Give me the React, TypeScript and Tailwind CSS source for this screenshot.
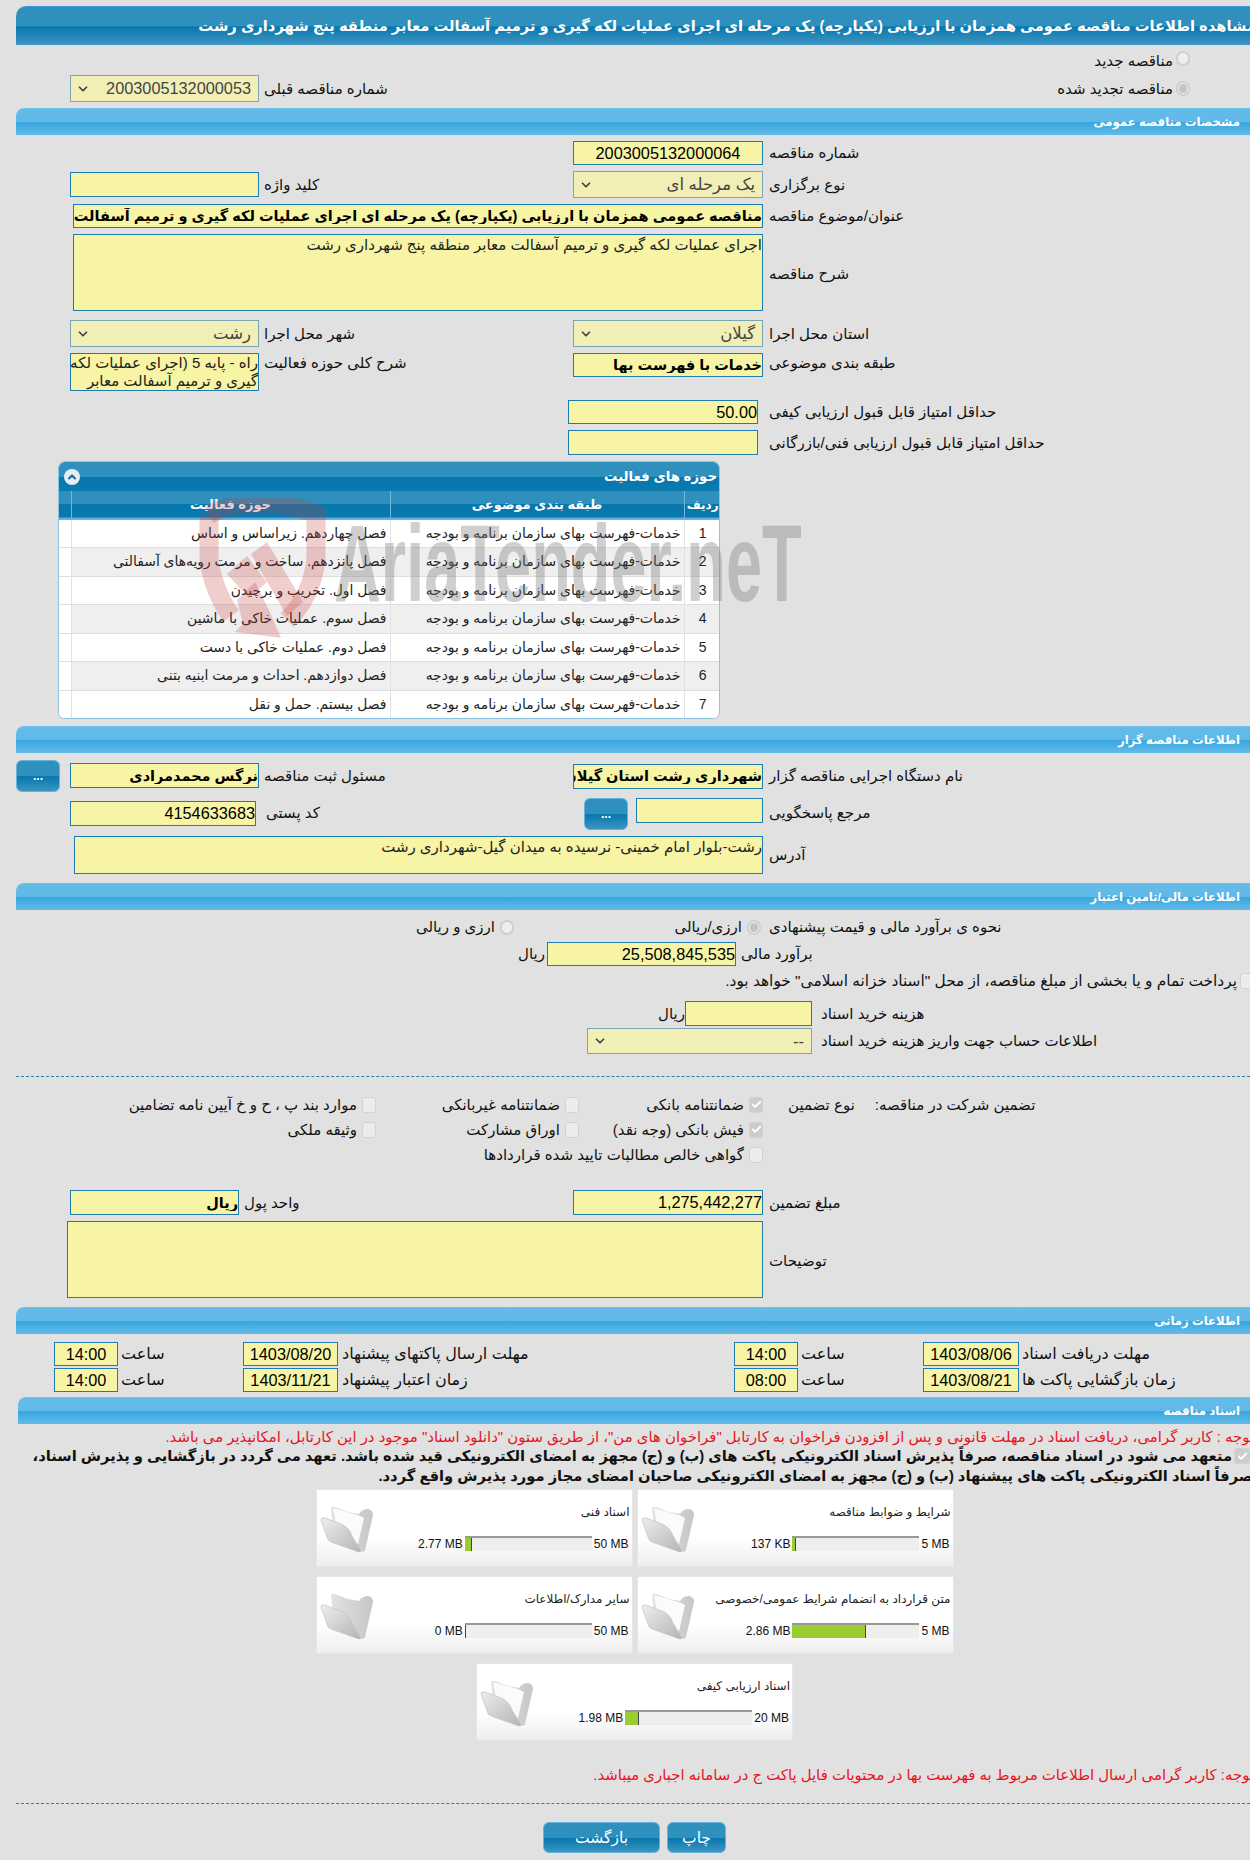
import { ChevronDown, Check, ChevronUp } from 'lucide-react'

const font = "font-['Liberation_Sans','DejaVu_Sans',sans-serif]"

function SectionBar({ title, className }: { title: string; className: string }) {
  return (
    <div className={`h-[27px] rounded-tl-[8px] bg-[linear-gradient(#64bbe9_0%,#60b9e8_50%,#38a7e0_52%,#62bbe9_100%)] border-t border-[#6cc3ef] flex items-center justify-end pr-[10px] text-white text-[11.7px] font-bold ${className}`}>
      <span dir="rtl">{title}</span>
    </div>
  )
}

function Label({ children, className = '' }: { children: React.ReactNode; className?: string }) {
  return <div dir="rtl" className={`text-left text-[15px] leading-[20px] text-[#111] whitespace-nowrap ${className}`}>{children}</div>
}

function Field({ value = '', className = '', bold = false }: { value?: string; className?: string; bold?: boolean }) {
  return (
    <input
      readOnly
      dir="rtl"
      value={value}
      className={`block h-[24px] bg-[#f7f5a5] border border-[#1f7cb0] outline-none text-black ${bold ? 'text-[14.5px] font-bold' : 'text-[16.3px]'} ${className}`}
    />
  )
}

function Area({ value = '', className = '' }: { value?: string; className?: string }) {
  return (
    <textarea
      readOnly
      dir="rtl"
      value={value}
      className={`block resize-none bg-[#f7f5a5] border border-[#1f7cb0] outline-none text-[15px] text-[#222] leading-[20px] overflow-hidden ${className}`}
    />
  )
}

function Select({ value, className = '', latin = false }: { value: string; className?: string; latin?: boolean }) {
  return (
    <div className={`h-[27px] bg-[#f1efb6] border border-[#7ba4b4] flex items-center justify-between pl-[5px] pr-[7px] text-[#444] ${latin ? 'text-[16.3px]' : 'text-[16.5px]'} ${className}`}>
      <ChevronDown size={14} strokeWidth={3} className="text-[#444]" />
      <span dir="rtl">{value}</span>
    </div>
  )
}

function Radio({ on = false }: { on?: boolean }) {
  return (
    <span className="shrink-0 w-[14px] h-[15px] rounded-full border-2 border-[#cfcfcf] bg-[#efefef] flex items-center justify-center">
      {on && <span className="w-[8px] h-[9px] rounded-full bg-[#c4c4c4]" />}
    </span>
  )
}

function Tick({ on = false, className = '' }: { on?: boolean; className?: string }) {
  return (
    <span className={`shrink-0 w-[14px] h-[16px] rounded-[3px] border border-[#d2d2d2] flex items-center justify-center ${on ? 'bg-[#cdcdcd]' : 'bg-[#ececec]'} ${className}`}>
      {on && <Check size={11} strokeWidth={4} className="text-white" />}
    </span>
  )
}

function DotsButton({ className = '' }: { className?: string }) {
  return (
    <div className={`w-[44px] h-[32px] rounded-[6px] border border-[#64b4dc] bg-[linear-gradient(#2f8fbd_0%,#2f8fbd_50%,#0677ae_52%,#3c95c0_100%)] text-white text-[12px] font-bold flex items-center justify-center ${className}`}>
      ...
    </div>
  )
}

function Folder({ open = true }: { open?: boolean }) {
  return (
    <svg viewBox="0 0 54 48" className="w-[54px] h-[48px] shrink-0 mt-[16px]">
      <defs>
        <linearGradient id="foldFront" x1="0" y1="0" x2="1" y2="1">
          <stop offset="0" stopColor="#eeeeee" />
          <stop offset="1" stopColor="#b4b4b4" />
        </linearGradient>
        <linearGradient id="foldBack" x1="0" y1="0" x2="1" y2="0">
          <stop offset="0" stopColor="#e2e2e2" />
          <stop offset="1" stopColor="#c6c6c6" />
        </linearGradient>
      </defs>
      <path d="M11 2 Q12 0 15 1 L28 6 L39 8 Q42 3 48 3 Q53 4 53 9 L45 44 Q44 47 40 45 L14 30 Z" fill="url(#foldBack)" />
      {open && <path d="M13 2 L38 9 L44 12 L38 38 L17 24 Z" fill="#fbfbfb" />}
      <path d="M1 14 Q1 11 5 12 L21 18 Q29 21 32 30 L41 45 Q40 47 36 45 L11 36 Q8 35 7 31 Z" fill="url(#foldFront)" stroke="#c2c2c2" strokeWidth="0.7" />
    </svg>
  )
}

function FileCard({ title, max, used, pct, open = true }: { title: string; max: string; used: string; pct: number; open?: boolean }) {
  return (
    <div className="w-[317px] h-[78px] bg-[linear-gradient(#ffffff_0%,#ffffff_62%,#eeeeee_100%)] border border-[#e6e6e6] flex items-start pl-[3px]">
      <Folder open={open} />
      <div className="flex-1 pt-[14px]">
        <div dir="rtl" className="text-[12px] text-[#222] h-[32px] leading-[16px] pr-[2px] whitespace-nowrap">{title}</div>
        <div className="flex items-center justify-end text-[12px] text-[#111] h-[15px]">
          <span className="pr-[2px]">{used}</span>
          <div className="w-[127px] h-[15px] bg-[#eeeeee] border-t-2 border-[#999]">
            <div className="h-full bg-[#9acd32] border-r border-[#444]" style={{ width: `${pct}%` }} />
          </div>
          <span className="pl-[2px] pr-[3px]">{max}</span>
        </div>
      </div>
    </div>
  )
}

const rows = [
  'فصل چهاردهم. زیراساس و اساس',
  'فصل پانزدهم. ساخت و مرمت رویه‌های آسفالتی',
  'فصل اول. تخریب و برچیدن',
  'فصل سوم. عملیات خاکی با ماشین',
  'فصل دوم. عملیات خاکی با دست',
  'فصل دوازدهم. احداث و مرمت ابنیه بتنی',
  'فصل بیستم. حمل و نقل',
]

function ActivityTable() {
  return (
    <div className="w-[662px] ml-[58px] mt-[6px] h-[258px] rounded-[7px] border border-[#8cc4e4] overflow-hidden bg-white">
      <div className="h-[29px] bg-[linear-gradient(#2f8fbd_0%,#2f8fbd_50%,#0677ae_52%,#0a7ab0_100%)] flex items-center justify-between pl-[5px] pr-[2px] text-white font-bold text-[13.3px]">
        <span className="w-[16px] h-[16px] rounded-full bg-[#e4eef4] flex items-center justify-center">
          <ChevronUp size={12} strokeWidth={4} className="text-[#0a6a9c]" />
        </span>
        <span dir="rtl">حوزه های فعالیت</span>
      </div>
      <table dir="rtl" className="w-full table-fixed border-collapse">
        <colgroup>
          <col className="w-[37px]" />
          <col className="w-[294px]" />
          <col className="w-[319px]" />
          <col className="w-[12px]" />
        </colgroup>
        <thead>
          <tr className="h-[28px] bg-[linear-gradient(#2f8fbd_0%,#2f8fbd_50%,#0677ae_52%,#0a7ab0_100%)] text-white text-[13px] font-bold border-b-2 border-[#5fb6e4]">
            <th className="border-l border-[#6fb7dd] font-bold text-[12px] whitespace-nowrap">ردیف</th>
            <th className="border-l border-[#6fb7dd] font-bold">طبقه بندی موضوعی</th>
            <th className="border-l border-[#6fb7dd] font-bold">حوزه فعالیت</th>
            <th />
          </tr>
        </thead>
        <tbody className="text-[13.9px] text-[#222]">
          {rows.map((r, i) => (
            <tr key={i} className={`h-[28.5px] border-b border-[#dedede] ${i % 2 ? 'bg-[#efefef]' : 'bg-white'}`}>
              <td className="text-center border-l border-[#e2e2e2] text-[14px]">{i + 1}</td>
              <td className="pr-[3px] border-l border-[#e2e2e2] whitespace-nowrap">خدمات-فهرست بهای سازمان برنامه و بودجه</td>
              <td className="pr-[3px] border-l border-[#e2e2e2] whitespace-nowrap">{r}</td>
              <td className="bg-white" />
            </tr>
          ))}
        </tbody>
      </table>
    </div>
  )
}

function Watermark() {
  return (
    <div className="absolute left-[199px] top-[498px] w-[610px] h-[146px] pointer-events-none">
      <svg viewBox="0 0 127 146" className="absolute left-0 top-0 w-[127px] h-[146px]">
        <path d="M10 16 Q62 -6 117 16 L117 62 Q112 100 88 122" fill="none" stroke="#c83c3c" strokeOpacity="0.25" strokeWidth="19" />
        <path d="M10 16 L10 62 Q14 92 32 118" fill="none" stroke="#c83c3c" strokeOpacity="0.25" strokeWidth="19" />
        <path d="M28 76 L48 58 L68 84 L50 100 Z" fill="#c83c3c" fillOpacity="0.25" />
        <path d="M52 56 L68 44 L104 104 L88 118 Z" fill="#c83c3c" fillOpacity="0.25" />
        <path d="M38 102 L56 84 L70 112 L82 140 L36 134 L44 126 Z" fill="#c83c3c" fillOpacity="0.25" />
      </svg>
      <div className="absolute left-[135px] top-[15px] text-[110px] leading-[100px] font-bold text-[#777] opacity-35 whitespace-nowrap font-['Liberation_Sans',sans-serif] origin-left scale-x-[0.59]">
        AriaTender.neT
      </div>
    </div>
  )
}

function FormRow({ children, className = '' }: { children: React.ReactNode; className?: string }) {
  return <div className={`grid grid-cols-[259px_310px_194px_1fr] ${className}`}>{children}</div>
}

export default function App() {
  return (
    <div className={`relative w-[1250px] h-[1860px] overflow-hidden bg-[#e1e1e1] pt-[6px] ${font}`}>
      {/* top title */}
      <div className="ml-[16px] h-[39px] rounded-tl-[10px] overflow-hidden bg-[linear-gradient(#2f8fbd_0%,#2f8fbd_50%,#0677ae_52%,#4096c2_100%)] border-t border-[#3a9ad8] flex items-center justify-end text-white text-[14.7px] font-bold">
        <span dir="rtl" className="shrink-0 whitespace-nowrap -mr-[6px]">
          مشاهده اطلاعات مناقصه عمومی همزمان با ارزیابی (یکپارچه) یک مرحله ای اجرای عملیات لکه گیری و ترمیم آسفالت معابر منطقه پنج شهرداری رشت
        </span>
      </div>

      <div className="h-[30px] pt-[6px] flex justify-end items-start pr-[60px] gap-[3px]">
        <Label>مناقصه جدید</Label>
        <Radio />
      </div>

      <FormRow className="h-[27px] items-center">
        <div className="flex justify-end"><Select latin value="2003005132000053" className="w-[189px]" /></div>
        <Label className="pl-[5px]">شماره مناقصه قبلی</Label>
        <div />
        <div className="flex justify-end items-center pr-[60px] gap-[3px]">
          <Label>مناقصه تجدید شده</Label>
          <Radio on />
        </div>
      </FormRow>

      <SectionBar title="مشخصات مناقصه عمومی" className="ml-[16px] mt-[6px]" />

      <FormRow className="mt-[6px] items-center">
        <div />
        <div />
        <div className="flex justify-end"><Field value="2003005132000064" className="w-[190px] text-center" /></div>
        <Label className="pl-[6px]">شماره مناقصه</Label>
      </FormRow>

      <FormRow className="mt-[6px] items-center h-[27px]">
        <div className="flex justify-end"><Field className="w-[189px] !h-[25px]" /></div>
        <Label className="pl-[5px]">کلید واژه</Label>
        <div className="flex justify-end"><Select value="یک مرحله ای" className="w-[190px]" /></div>
        <Label className="pl-[6px]">نوع برگزاری</Label>
      </FormRow>

      <FormRow className="mt-[6px] items-center">
        <div className="col-span-3 flex justify-end">
          <Field bold value="مناقصه عمومی همزمان با ارزیابی (یکپارچه) یک مرحله ای اجرای عملیات لکه گیری و ترمیم آسفالت معابر منطقه پنج شهرداری رشت" className="w-[690px]" />
        </div>
        <Label className="pl-[6px]">عنوان/موضوع مناقصه</Label>
      </FormRow>

      <FormRow className="mt-[6px] items-center">
        <div className="col-span-3 flex justify-end">
          <Area value="اجرای عملیات لکه گیری و ترمیم آسفالت معابر منطقه پنج شهرداری رشت" className="w-[690px] h-[77px]" />
        </div>
        <Label className="pl-[6px] pt-[3px]">شرح مناقصه</Label>
      </FormRow>

      <FormRow className="mt-[9px] items-center">
        <div className="flex justify-end"><Select value="رشت" className="w-[189px]" /></div>
        <Label className="pl-[5px]">شهر محل اجرا</Label>
        <div className="flex justify-end"><Select value="گیلان" className="w-[190px]" /></div>
        <Label className="pl-[6px]">استان محل اجرا</Label>
      </FormRow>

      <FormRow className="mt-[6px] items-start h-[38px]">
        <div className="flex justify-end">
          <Area value={'راه - پایه 5 (اجرای عملیات لکه\nگیری و ترمیم آسفالت معابر'} className="w-[189px] h-[38px] !leading-[18px] whitespace-pre" />
        </div>
        <Label className="pl-[5px]">شرح کلی حوزه فعالیت</Label>
        <div className="flex justify-end"><Field bold value="خدمات با فهرست بها" className="w-[190px]" /></div>
        <Label className="pl-[6px]">طبقه بندی موضوعی</Label>
      </FormRow>

      <FormRow className="mt-[9px] items-center">
        <div />
        <div />
        <div className="flex justify-end pr-[5px]"><Field value="50.00" className="w-[190px]" /></div>
        <Label className="pl-[6px]">حداقل امتیاز قابل قبول ارزیابی کیفی</Label>
      </FormRow>

      <FormRow className="mt-[6px] items-center">
        <div />
        <div />
        <div className="flex justify-end pr-[5px]"><Field className="w-[190px] !h-[25px]" /></div>
        <Label className="pl-[6px]">حداقل امتیاز قابل قبول ارزیابی فنی/بازرگانی</Label>
      </FormRow>

      <ActivityTable />
      <Watermark />

      <SectionBar title="اطلاعات مناقصه گزار" className="ml-[16px] mt-[7px]" />

      <FormRow className="mt-[7px] items-center h-[32px]">
        <div className="flex justify-between pl-[16px]">
          <DotsButton />
          <Field bold value="نرگس محمدمرادی" className="w-[189px] !h-[25px] mt-[3px]" />
        </div>
        <Label className="pl-[5px]">مسئول ثبت مناقصه</Label>
        <div className="flex justify-end"><Field bold value="شهرداری رشت استان گیلان" className="w-[190px] !h-[25px]" /></div>
        <Label className="pl-[6px]">نام دستگاه اجرایی مناقصه گزار</Label>
      </FormRow>

      <FormRow className="mt-[6px] items-start h-[32px]">
        <div className="flex justify-end pt-[3px] pr-[3px]"><Field value="4154633683" className="w-[186px] !h-[25px]" /></div>
        <Label className="pl-[7px] pt-[5px]">کد پستی</Label>
        <div className="flex justify-end gap-[8px] -ml-[60px]">
          <DotsButton />
          <Field className="w-[127px] !h-[25px]" />
        </div>
        <Label className="pl-[6px] pt-[5px]">مرجع پاسخگویی</Label>
      </FormRow>

      <FormRow className="mt-[6px] items-center">
        <div className="col-span-3 flex justify-end">
          <Area value="رشت-بلوار امام خمینی- نرسیده به میدان گیل-شهرداری رشت" className="w-[689px] h-[38px]" />
        </div>
        <Label className="pl-[6px]">آدرس</Label>
      </FormRow>

      <SectionBar title="اطلاعات مالی/تامین اعتبار" className="ml-[16px] mt-[9px]" />

      <div className="mt-[7px] h-[18px] grid grid-cols-[514px_247px_1fr] items-center">
        <div className="flex justify-end items-center gap-[5px]"><Label>ارزی و ریالی</Label><Radio /></div>
        <div className="flex justify-end items-center gap-[5px]"><Label>ارزی/ریالی</Label><Radio on /></div>
        <Label className="pl-[8px]">نحوه ی برآورد مالی و قیمت پیشنهادی</Label>
      </div>

      <div className="mt-[7px] flex items-center pl-[518px]">
        <Label className="w-[29px]">ریال</Label>
        <Field value="25,508,845,535" className="w-[189px]" />
        <Label className="pl-[5px]">برآورد مالی</Label>
      </div>

      <div className="mt-[8px] h-[14px] flex justify-end items-center gap-[3px] -mr-[4px]">
        <Label className="!text-[15.4px]">پرداخت تمام و یا بخشی از مبلغ مناقصه، از محل &quot;اسناد خزانه اسلامی&quot; خواهد بود.</Label>
        <Tick />
      </div>

      <div className="mt-[13px] flex items-center pl-[661px]">
        <Label className="w-[24px]">ریال</Label>
        <Field className="w-[127px] !h-[25px]" />
        <Label className="pl-[9px]">هزینه خرید اسناد</Label>
      </div>

      <div className="mt-[2px] flex items-center pl-[587px]">
        <Select value="--" className="w-[225px] !h-[26px]" />
        <Label className="pl-[9px]">اطلاعات حساب جهت واریز هزینه خرید اسناد</Label>
      </div>

      <div className="mt-[22px] ml-[16px] border-t border-dashed border-[#2a80a8]" />

      <div className="mt-[15px] grid grid-cols-[376px_203px_184px_1fr] grid-rows-[25px_25px_25px] items-center">
        <div className="flex justify-end items-center gap-[5px]"><Label>موارد بند پ ، ح و خ آیین نامه تضامین</Label><Tick /></div>
        <div className="flex justify-end items-center gap-[5px]"><Label>ضمانتنامه غیربانکی</Label><Tick /></div>
        <div className="flex justify-end items-center gap-[5px]"><Label>ضمانتنامه بانکی</Label><Tick on /></div>
        <div className="flex items-center pl-[25px] gap-[20px]"><Label>نوع تضمین</Label><Label>تضمین شرکت در مناقصه:</Label></div>

        <div className="flex justify-end items-center gap-[5px]"><Label>وثیقه ملکی</Label><Tick /></div>
        <div className="flex justify-end items-center gap-[5px]"><Label>اوراق مشارکت</Label><Tick /></div>
        <div className="flex justify-end items-center gap-[5px]"><Label>فیش بانکی (وجه نقد)</Label><Tick on /></div>
        <div />

        <div />
        <div />
        <div className="flex justify-end items-center gap-[5px]"><Label>گواهی خالص مطالبات تایید شده قراردادها</Label><Tick /></div>
        <div />
      </div>

      <FormRow className="mt-[23px] items-center">
        <div className="flex pl-[70px]"><Field bold value="ریال" className="w-[169px] !h-[25px]" /></div>
        <Label className="-ml-[15px]">واحد پول</Label>
        <div className="flex justify-end"><Field value="1,275,442,277" className="w-[190px] !h-[25px]" /></div>
        <Label className="pl-[6px]">مبلغ تضمین</Label>
      </FormRow>

      <FormRow className="mt-[6px] items-center">
        <div className="col-span-3 flex justify-end"><Area className="w-[696px] h-[77px]" /></div>
        <Label className="pl-[6px] pt-[3px]">توضیحات</Label>
      </FormRow>

      <SectionBar title="اطلاعات زمانی" className="ml-[16px] mt-[9px]" />

      <div className="mt-[8px] grid grid-cols-[64px_125px_95px_396px_64px_125px_96px_1fr] grid-rows-[24px_24px] gap-y-[2px] items-center pl-[54px]">
        <Field value="14:00" className="w-[64px] text-center" />
        <Label className="pl-[3px] !text-[16px]">ساعت</Label>
        <Field value="1403/08/20" className="w-[95px] text-center" />
        <Label className="pl-[4px] !text-[16px]">مهلت ارسال پاکتهای پیشنهاد</Label>
        <Field value="14:00" className="w-[64px] text-center" />
        <Label className="pl-[3px] !text-[16px]">ساعت</Label>
        <Field value="1403/08/06" className="w-[96px] text-center" />
        <Label className="pl-[3px] !text-[16px]">مهلت دریافت اسناد</Label>

        <Field value="14:00" className="w-[64px] text-center" />
        <Label className="pl-[3px] !text-[16px]">ساعت</Label>
        <Field value="1403/11/21" className="w-[95px] text-center" />
        <Label className="pl-[4px] !text-[16px]">زمان اعتبار پیشنهاد</Label>
        <Field value="08:00" className="w-[64px] text-center" />
        <Label className="pl-[3px] !text-[16px]">ساعت</Label>
        <Field value="1403/08/21" className="w-[96px] text-center" />
        <Label className="pl-[3px] !text-[16px]">زمان بازگشایی پاکت ها</Label>
      </div>

      <SectionBar title="اسناد مناقصه" className="ml-[18px] mt-[5px]" />

      <div className="mt-[5px] h-[17px] flex justify-end items-center overflow-hidden">
        <span dir="rtl" className="shrink-0 whitespace-nowrap text-[14.9px] text-[#e8141c] -mr-[4px]">
          توجه : کاربر گرامی، دریافت اسناد در مهلت قانونی و پس از افزودن فراخوان به کارتابل &quot;فراخوان های من&quot;، از طریق ستون &quot;دانلود اسناد&quot; موجود در این کارتابل، امکانپذیر می باشد.
        </span>
      </div>

      <div className="relative h-[43px] text-[14.7px] font-bold text-[#111] leading-[20px] overflow-hidden">
        <Tick on className="absolute right-0 top-[2px] w-[16px]" />
        <div dir="rtl" className="pr-[18px] whitespace-nowrap">
          متعهد می شود در اسناد مناقصه، صرفاً پذیرش اسناد الکترونیکی پاکت های (ب) و (ج) مجهز به امضای الکترونیکی قید شده باشد. تعهد می گردد در بازگشایی و پذیرش اسناد،
        </div>
        <div dir="rtl" className="-mr-[3px] whitespace-nowrap">
          صرفاً اسناد الکترونیکی پاکت های پیشنهاد (ب) و (ج) مجهز به امضای الکترونیکی صاحبان امضای مجاز مورد پذیرش واقع گردد.
        </div>
      </div>

      <div className="flex flex-col items-center gap-[9px] pl-[19px]">
        <div className="flex gap-[4px]">
          <FileCard title="اسناد فنی" used="2.77 MB" max="50 MB" pct={6} />
          <FileCard title="شرایط و ضوابط مناقصه" used="137 KB" max="5 MB" pct={3} />
        </div>
        <div className="flex gap-[4px]">
          <FileCard title="سایر مدارک/اطلاعات" used="0 MB" max="50 MB" pct={0} open={false} />
          <FileCard title="متن قرارداد به انضمام شرایط عمومی/خصوصی" used="2.86 MB" max="5 MB" pct={58} />
        </div>
        <FileCard title="اسناد ارزیابی کیفی" used="1.98 MB" max="20 MB" pct={11} />
      </div>

      <div className="mt-[26px] h-[17px] flex justify-end items-center overflow-hidden">
        <span dir="rtl" className="shrink-0 whitespace-nowrap text-[14.9px] text-[#e8141c] -mr-[4px]">
          توجه: کاربر گرامی ارسال اطلاعات مربوط به فهرست بها در محتویات فایل پاکت ج در سامانه اجباری میباشد.
        </span>
      </div>

      <div className="mt-[19px] ml-[16px] border-t border-dashed border-[#2a80a8]" />

      <div className="mt-[18px] flex justify-center gap-[7px] pl-[19px] text-white text-[15.5px]">
        <div className="w-[117px] h-[31px] rounded-[6px] border border-[#64b4dc] bg-[linear-gradient(#2f8fbd_0%,#2f8fbd_50%,#0677ae_52%,#3c95c0_100%)] flex items-center justify-center">بازگشت</div>
        <div className="w-[59px] h-[31px] rounded-[6px] border border-[#64b4dc] bg-[linear-gradient(#2f8fbd_0%,#2f8fbd_50%,#0677ae_52%,#3c95c0_100%)] flex items-center justify-center">چاپ</div>
      </div>
    </div>
  )
}
